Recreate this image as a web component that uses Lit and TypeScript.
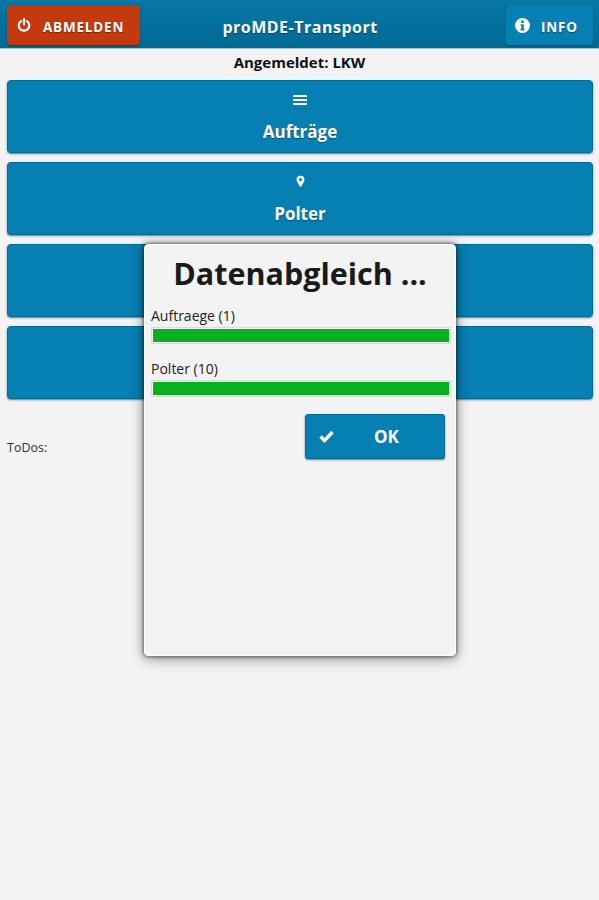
import { LitElement, html, css } from "lit";
import { customElement } from "lit/decorators.js";

const barsIcon = html`<svg width="14" height="12" viewBox="0 0 14 12"><path fill="#fff" d="M0 1h14v2H0zM0 5h14v2H0zM0 9h14v2H0z"/></svg>`;
const pinIcon = html`<svg width="9" height="13" viewBox="0 0 10 14"><path fill="#fff" fill-rule="evenodd" d="M5 .5A4.4 4.4 0 0 0 .6 4.9C.6 7.6 5 13.5 5 13.5s4.4-5.900 4.400-8.600A4.400 4.400 0 0 0 5 .5zm0 2.600a1.800 1.800 0 1 1 0 3.600 1.800 1.800 0 0 1 0-3.600z"/></svg>`;
const powerIcon = html`<svg width="14" height="14" viewBox="0 0 14 14"><path fill="none" stroke="#fff" stroke-width="2.200" stroke-linecap="round" d="M4 3.200a5.200 5.200 0 1 0 6 0M7 1v5.500"/></svg>`;
const infoIcon = html`<svg width="15" height="15" viewBox="0 0 15 15"><path fill="#fff" fill-rule="evenodd" d="M7.500 0a7.500 7.500 0 1 1 0 15 7.500 7.500 0 0 1 0-15zM6.200 2.500v2.500h2.600V2.500zM5.500 6.200v1.500h.8v3.100h-.8v1.700h4v-1.700h-.7V6.200z"/></svg>`;
const checkIcon = html`<svg width="15" height="13" viewBox="0 0 15 13"><path fill="none" stroke="#fff" stroke-width="3.400" d="M1.500 6.500l4 4L13.500 2"/></svg>`;

@customElement("app-root")
export class AppRoot extends LitElement {
  static styles = css`
    :host {
      display: block;
      position: relative;
      height: 900px;
      background: #f3f3f3;
      font-family: "Open Sans", "Liberation Sans", sans-serif;
      color: #1c1c1c;
      overflow: hidden;
    }
    .header {
      height: 49px;
      box-sizing: border-box;
      padding: 5px 6px 4px 7px;
      display: grid;
      grid-template-columns: 1fr auto 1fr;
      align-items: start;
      background: linear-gradient(#0777a5, #006a96);
      border-bottom: 1px solid #9fc4d4;
    }
    .hbtn {
      display: flex;
      align-items: center;
      box-sizing: border-box;
      height: 40px;
      border-radius: 4px;
      color: #fff;
      font-weight: 700;
      font-size: 13.500px;
      letter-spacing: 0.8px;
      box-shadow: 0 1px 2px rgba(0, 40, 60, 0.6);
      text-shadow: 0 1px 1px rgba(0, 0, 0, 0.4);
    }
    .hbtn span {
      padding-top: 3px;
    }
    .logout {
      justify-self: start;
      width: 133px;
      padding-left: 10px;
      gap: 12px;
      background: #c4390d;
    }
    .info {
      justify-self: end;
      width: 87px;
      padding-left: 9px;
      gap: 11px;
      background: #0680b3;
    }
    .title {
      color: #fff;
      font-weight: 700;
      font-size: 16px;
      letter-spacing: 0.5px;
      line-height: 44px;
      text-shadow: 0 1px 1px rgba(0, 0, 0, 0.4);
    }
    .user {
      height: 31px;
      box-sizing: border-box;
      padding-top: 3px;
      text-align: center;
      font-weight: 700;
      font-size: 15px;
      line-height: 20px;
      color: #111;
    }
    .menu {
      display: flex;
      flex-direction: column;
      gap: 9px;
      padding: 0 6px 0 7px;
    }
    .mbtn {
      height: 73px;
      box-sizing: border-box;
      padding-top: 10px;
      display: flex;
      flex-direction: column;
      align-items: center;
      border: 1px solid #056a94;
      border-radius: 4px;
      background: #0680b3;
      color: #fff;
      font-weight: 700;
      font-size: 17px;
      box-shadow: 0 1px 2px rgba(0, 40, 60, 0.6);
      text-shadow: 0 1px 1px rgba(0, 0, 0, 0.4);
    }
    .iconbox {
      height: 17px;
      display: flex;
      align-items: center;
      justify-content: center;
    }
    .mlabel {
      margin-top: 12px;
      line-height: 24px;
    }
    .todos {
      margin: 40px 0 0 7px;
      font-size: 12.500px;
      line-height: 18px;
      color: #333;
    }
    .dialog {
      position: absolute;
      left: 144px;
      top: 244px;
      width: 312px;
      height: 412px;
      box-sizing: border-box;
      padding: 0 4px 0 6px;
      background: #f3f3f3;
      border: 1px solid #fff;
      border-radius: 4px;
      box-shadow: 0 0 4px rgba(0, 0, 0, 0.7), 0 2px 14px rgba(0, 0, 0, 0.45);
    }
    h1 {
      margin: 0;
      padding-top: 7px;
      height: 52px;
      box-sizing: border-box;
      text-align: center;
      font-size: 30.500px;
      font-weight: 700;
      line-height: 42px;
      color: #1a1a1a;
      padding-right: 2px;
    }
    .plabel {
      font-size: 14px;
      line-height: 20px;
      padding-bottom: 1px;
      color: #222;
      font-weight: 500;
    }
    .track {
      box-sizing: border-box;
      height: 17px;
      margin-bottom: 15px;
      border: 1px solid #d5dfd5;
      padding: 1px;
    }
    .bar {
      height: 100%;
      background: #0bb020;
    }
    .first {
      margin-top: 9px;
    }
    .okrow {
      display: flex;
      justify-content: flex-end;
      padding: 2px 6px 0 0;
    }
    .ok {
      width: 140px;
      height: 45px;
      box-sizing: border-box;
      display: flex;
      align-items: center;
      padding-left: 13px;
      border: 1px solid #056a94;
      border-radius: 3px;
      background: #0680b3;
      color: #fff;
      font-weight: 700;
      font-size: 17px;
      box-shadow: 0 1px 2px rgba(0, 40, 60, 0.6);
    }
    .oklabel {
      flex: 1;
      text-align: center;
      padding-right: 5px;
    }
  `;

  render() {
    return html`
      <div class="header">
        <div class="hbtn logout">${powerIcon}<span>ABMELDEN</span></div>
        <div class="title">proMDE-Transport</div>
        <div class="hbtn info">${infoIcon}<span>INFO</span></div>
      </div>
      <div class="user">Angemeldet: LKW</div>
      <div class="menu">
        <div class="mbtn"><div class="iconbox">${barsIcon}</div><div class="mlabel">Aufträge</div></div>
        <div class="mbtn"><div class="iconbox">${pinIcon}</div><div class="mlabel">Polter</div></div>
        <div class="mbtn"></div>
        <div class="mbtn"></div>
      </div>
      <div class="todos">ToDos:</div>
      <div class="dialog">
        <h1>Datenabgleich ...</h1>
        <div class="plabel first">Auftraege (1)</div>
        <div class="track"><div class="bar" style="width:100%"></div></div>
        <div class="plabel">Polter (10)</div>
        <div class="track"><div class="bar" style="width:100%"></div></div>
        <div class="okrow">
          <div class="ok">${checkIcon}<span class="oklabel">OK</span></div>
        </div>
      </div>
    `;
  }
}
